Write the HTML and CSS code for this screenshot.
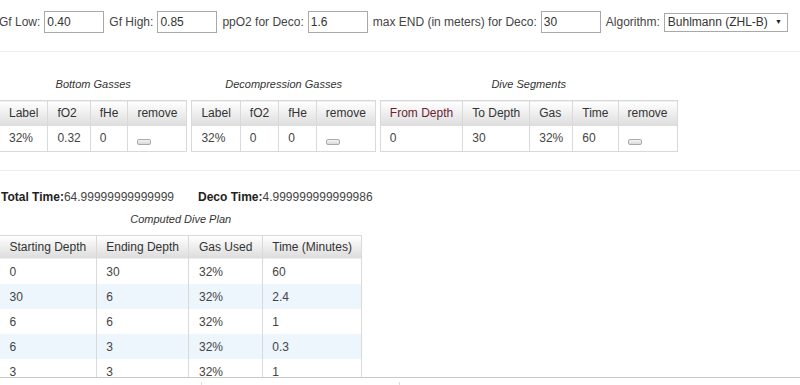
FILE: index.html
```html
<!DOCTYPE html>
<html lang="en">
<head>
    <meta charset="UTF-8">
    <title>Deco Planner</title>
    <link rel="stylesheet" href="styles.css">
</head>
<body>
    <div class="page">
        <div class="settings">
            <label>Gf Low:</label>
            <input type="text" value="0.40">
            <label>Gf High:</label>
            <input type="text" value="0.85">
            <label>ppO2 for Deco:</label>
            <input type="text" value="1.6">
            <label>max END (in meters) for Deco:</label>
            <input type="text" value="30">
            <label>Algorithm:</label>
            <span class="select-wrap">
                <select>
                    <option>Buhlmann (ZHL-B)</option>
                </select>
            </span>
        </div>

        <hr>

        <div class="inputs">
            <table class="grid">
                <caption>Bottom Gasses</caption>
                <thead>
                    <tr><th>Label</th><th>fO2</th><th>fHe</th><th>remove</th></tr>
                </thead>
                <tbody>
                    <tr><td>32%</td><td>0.32</td><td>0</td><td><button class="remove"></button></td></tr>
                </tbody>
            </table>

            <table class="grid">
                <caption>Decompression Gasses</caption>
                <thead>
                    <tr><th>Label</th><th>fO2</th><th>fHe</th><th>remove</th></tr>
                </thead>
                <tbody>
                    <tr><td>32%</td><td>0</td><td>0</td><td><button class="remove"></button></td></tr>
                </tbody>
            </table>

            <table class="grid">
                <caption>Dive Segments</caption>
                <thead>
                    <tr><th class="sorted">From Depth</th><th>To Depth</th><th>Gas</th><th>Time</th><th>remove</th></tr>
                </thead>
                <tbody>
                    <tr><td>0</td><td>30</td><td>32%</td><td>60</td><td><button class="remove"></button></td></tr>
                </tbody>
            </table>
        </div>

        <hr>

        <p class="totals">
            <span class="total"><b>Total Time:</b>64.99999999999999</span>
            <span class="total"><b>Deco Time:</b>4.999999999999986</span>
        </p>

        <table class="grid plan">
            <caption>Computed Dive Plan</caption>
            <thead>
                <tr><th>Starting Depth</th><th>Ending Depth</th><th>Gas Used</th><th>Time (Minutes)</th></tr>
            </thead>
            <tbody>
                <tr><td>0</td><td>30</td><td>32%</td><td>60</td></tr>
                <tr><td>30</td><td>6</td><td>32%</td><td>2.4</td></tr>
                <tr><td>6</td><td>6</td><td>32%</td><td>1</td></tr>
                <tr><td>6</td><td>3</td><td>32%</td><td>0.3</td></tr>
                <tr><td>3</td><td>3</td><td>32%</td><td>1</td></tr>
            </tbody>
        </table>
    </div>

    <!-- chart panel peeking in at the bottom of the window -->
    <div class="chart-edge">
        <span class="tick tick-a"></span>
        <span class="tick tick-b"></span>
    </div>
</body>
</html>
```

FILE: styles.css
```css
body {
    margin: 0;
    background: #fff;
    color: #444;
    font-family: "Liberation Sans", Arial, sans-serif;
    font-size: 12px;
    overflow: hidden;
}

.page {
    margin-left: -1px;
}

/* settings row */
.settings {
    display: flex;
    align-items: center;
    padding-top: 11px;
    white-space: nowrap;
}

.settings label {
    margin-right: 4px;
}

.settings input {
    box-sizing: border-box;
    width: 60px;
    height: 22px;
    margin: 0 5px 0 0;
    padding: 1px 2px;
    border: 1px solid #a9a9a9;
    font: inherit;
    color: #333;
}

.select-wrap {
    position: relative;
    display: inline-block;
}

.select-wrap select {
    -webkit-appearance: none;
    appearance: none;
    box-sizing: border-box;
    width: 124px;
    height: 19px;
    margin: 0;
    padding: 0 0 0 3px;
    border: 1px solid #a9a9a9;
    border-radius: 0;
    background: #fff;
    font: inherit;
    color: #333;
}

.select-wrap::after {
    content: "\25BC";
    position: absolute;
    right: 6px;
    top: 5px;
    font-size: 7px;
    color: #222;
    pointer-events: none;
}

hr {
    margin: 18px 0 0;
    border: 0;
    border-top: 1px solid #eee;
}

/* tables */
.inputs {
    display: flex;
    align-items: flex-start;
    gap: 4px;
    margin-top: 18px;
}

.grid {
    border-collapse: collapse;
    border: 1px solid #d9d9d9;
}

.grid caption {
    padding: 7px 0 9px;
    line-height: 14px;
    font-size: 11px;
    font-style: italic;
    color: #333;
}

.grid th,
.grid td {
    height: 25px;
    padding: 0 9px;
    border-left: 1px solid #d9d9d9;
    border-right: 1px solid #d9d9d9;
    text-align: left;
    white-space: nowrap;
}

.grid th {
    box-sizing: border-box;
    font-weight: normal;
    color: #333;
    background: linear-gradient(#ffffff, #dcdcdc);
}

.grid th.sorted {
    color: #6b1f33;
}

.grid td {
    color: #444;
}

.remove {
    display: inline-block;
    width: 14px;
    height: 6px;
    padding: 0;
    margin-top: 6px;
    vertical-align: middle;
    border: 1px solid #aaa;
    border-radius: 2px;
    background: linear-gradient(#f4f4f4, #dadada);
}

/* results */
.totals {
    display: flex;
    gap: 24px;
    margin: 19px 0 0;
    line-height: 15px;
    padding-left: 2px;
    color: #444;
}

.totals b {
    color: #222;
}

.plan caption {
    padding: 7px 0 9px;
}

.plan th,
.plan td {
    padding: 0 9.5px;
}

.plan th {
    height: 24px;
}

.plan tbody tr:nth-child(even) td {
    background: #edf5fd;
}

.chart-edge {
    position: fixed;
    left: 0;
    right: 0;
    top: 377px;
    bottom: 0;
    background: #fff;
    border-top: 1px solid #c8c8c8;
}

.tick {
    position: absolute;
    top: 4px;
    width: 1px;
    height: 5px;
    background: #ddd;
}

.tick-a {
    left: 201px;
}

.tick-b {
    left: 399px;
}
```
